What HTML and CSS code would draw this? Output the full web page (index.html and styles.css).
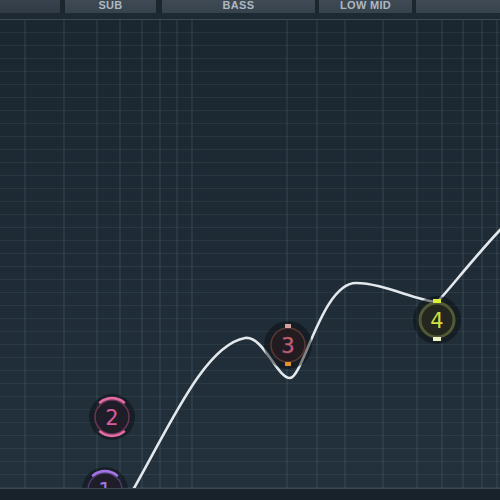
FILE: index.html
```html
<!DOCTYPE html>
<html lang="en">
<head>
<meta charset="UTF-8">
<meta name="viewport" content="width=device-width, initial-scale=1.0">
<title>EQ Curve</title>
<link rel="stylesheet" href="styles.css">
</head>
<body>

<div class="eq">
  <div class="tabs">
    <div class="tab tab-blank"></div>
    <div class="tab tab-sub"><span>SUB</span></div>
    <div class="tab tab-bass"><span>BASS</span></div>
    <div class="tab tab-lowmid"><span>LOW MID</span></div>
    <div class="tab tab-next"></div>
  </div>
  <div class="tab-strip"></div>

  <div class="graph">
    <svg class="graph-svg" width="500" height="468" viewBox="0 20 500 468">
      <!-- vertical frequency lines -->
      <g class="vlines">
        <line x1="25" y1="20" x2="25" y2="490"/>
        <line x1="64" y1="20" x2="64" y2="490"/>
        <line x1="97" y1="20" x2="97" y2="490"/>
        <line x1="120" y1="20" x2="120" y2="490"/>
        <line x1="142" y1="20" x2="142" y2="490"/>
        <line x1="160" y1="20" x2="160" y2="490"/>
        <line x1="177" y1="20" x2="177" y2="490"/>
        <line x1="192" y1="20" x2="192" y2="490"/>
        <line x1="287" y1="20" x2="287" y2="490"/>
        <line x1="317" y1="20" x2="317" y2="490"/>
        <line x1="345" y1="20" x2="345" y2="490"/>
        <line x1="383" y1="20" x2="383" y2="490"/>
        <line x1="417" y1="20" x2="417" y2="490"/>
        <line x1="442" y1="20" x2="442" y2="490"/>
        <line x1="463" y1="20" x2="463" y2="490"/>
        <line x1="482" y1="20" x2="482" y2="490"/>
        <line x1="497" y1="20" x2="497" y2="490"/>
      </g>

      <!-- response curve -->
      <path class="curve" d="M133,490 C170,425 205,345 245,338 C263,335 277,378 290,378 C303,378 322,283 356,283 C382,283 415,300 437,302 C445,295 470,262 500,230 L520,210"/>

      <!-- band 1 -->
      <g transform="translate(105,490)">
        <circle class="halo" r="23"/>
        <circle class="body body-1" r="17"/>
        <path class="arc arc-1" d="M-12,-14.6 A19,19 0 0 1 12,-14.6"/>
        <text class="num num-1" y="8">1</text>
      </g>

      <!-- band 2 -->
      <g transform="translate(112,417)">
        <circle class="halo" r="23"/>
        <circle class="body body-2" r="17"/>
        <path class="arc arc-2" d="M-12,-14.6 A19,19 0 0 1 12,-14.6"/>
        <path class="arc arc-2" d="M-12,14.6 A19,19 0 0 0 12,14.6"/>
        <text class="num num-2" y="8">2</text>
      </g>

      <!-- band 3 -->
      <g transform="translate(288,345)">
        <circle class="halo" r="24"/>
        <circle class="body body-3" r="17"/>
        <rect class="mark mark-3a" x="-3" y="-21" width="6" height="4"/>
        <rect class="mark mark-3b" x="-3" y="17" width="6" height="4"/>
        <text class="num num-3" y="8">3</text>
      </g>

      <!-- band 4 -->
      <g transform="translate(437,320)">
        <circle class="halo" r="24"/>
        <circle class="body body-4" r="17"/>
        <rect class="mark mark-4a" x="-4" y="-21" width="8" height="4"/>
        <rect class="mark mark-4b" x="-4" y="17" width="8" height="4"/>
        <text class="num num-4" y="8">4</text>
      </g>
    </svg>
  </div>

  <div class="footer"></div>
</div>

</body>
</html>
```

FILE: styles.css
```css
html, body {
  margin: 0;
  padding: 0;
  background: #17222a;
}
.eq {
  width: 500px;
  height: 500px;
  display: flex;
  flex-direction: column;
  overflow: hidden;
  font-family: "Liberation Sans", Arial, sans-serif;
}
.tabs {
  height: 13px;
  display: flex;
  background: #1c262d;
}
.tab {
  flex: none;
  height: 13px;
  display: flex;
  align-items: flex-start;
  justify-content: center;
  box-sizing: border-box;
  background: linear-gradient(#3f4a55, #36424c);
  color: #aeb8c2;
  font-size: 11px;
  font-weight: bold;
  line-height: 10px;
  letter-spacing: 0.3px;
}
.tab-blank {
  width: 60px;
  background: linear-gradient(#37424c, #303b45);
}
.tab-sub {
  width: 91px;
  margin-left: 5px;
}
.tab-bass {
  width: 153px;
  margin-left: 6px;
}
.tab-lowmid {
  width: 93px;
  margin-left: 4px;
}
.tab-next {
  flex: 1;
  margin-left: 4px;
}
.tab-strip {
  height: 6px;
  background: #1d2a33;
  border-bottom: 1px solid #3c4b56;
}
.graph {
  height: 468px;
  background:
    repeating-linear-gradient(to bottom, transparent 0, transparent 12px, rgba(95, 115, 130, 0.18) 12px, rgba(95, 115, 130, 0.18) 13px),
    linear-gradient(#1a2630, #23313c);
  overflow: hidden;
}
.graph-svg {
  display: block;
}
.vlines line {
  stroke: rgba(110, 132, 148, 0.26);
  stroke-width: 1.2;
}
.curve {
  fill: none;
  stroke: #e3e8ec;
  stroke-width: 2.6;
  stroke-linecap: round;
}
.halo {
  fill: rgba(8, 10, 14, 0.45);
}
.body {
  fill: #1f1d27;
  stroke-width: 1.5;
}
.body-1 { stroke: #4d3a72; }
.body-2 { stroke: #6b3557; }
.body-3 { stroke: #5a3833; fill: #221c20; }
.body-4 { stroke: #525a34; stroke-width: 3; fill: #23271f; }
.arc {
  fill: none;
  stroke-width: 2.6;
  stroke-linecap: round;
}
.arc-1 { stroke: #a374e6; }
.arc-2 { stroke: #e46aa6; }
.mark-3a { fill: #d9a0a0; }
.mark-3b { fill: #e3912f; }
.mark-4a { fill: #dcef3c; }
.mark-4b { fill: #eef2c8; }
.num {
  font-family: "DejaVu Sans", sans-serif;
  font-size: 21px;
  text-anchor: middle;
}
.num-1 { fill: #a27ae0; }
.num-2 { fill: #d85c9c; }
.num-3 { fill: #e8682e; stroke: #7a48a8; stroke-width: 0.6; }
.num-4 { fill: #cfe040; }
.footer {
  height: 11px;
  background: #17222a;
  border-top: 1px solid #3a4853;
}
```
